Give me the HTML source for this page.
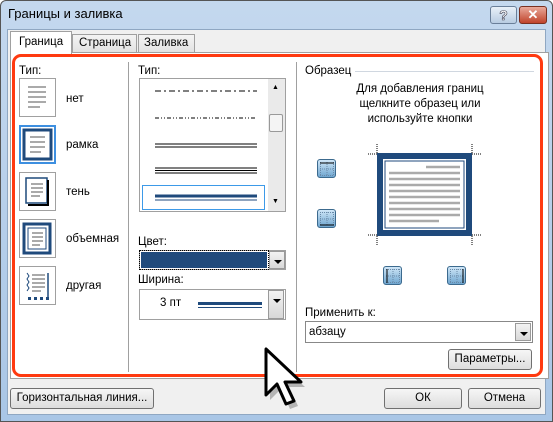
<!DOCTYPE html>
<html><head><meta charset="utf-8"><style>
*{margin:0;padding:0;box-sizing:border-box}
body{width:553px;height:422px;overflow:hidden;background:#fff;font-family:"Liberation Sans",sans-serif;font-size:11.5px;color:#000;position:relative}
.a{position:absolute}
.t{position:absolute;white-space:nowrap}
.box{position:absolute;border:1px solid #a0a0a0;background:#fff}
.btn{position:absolute;border:1px solid #707070;border-radius:3px;background:linear-gradient(#f6f6f6,#dddddd);text-align:center;line-height:18px}
.dd{position:absolute;width:16px;border:1px solid #9a9a9a;background:linear-gradient(#f3f3f3,#d8d8d8)}
.dd:after{content:"";position:absolute;left:4px;top:8px;border:4px solid transparent;border-top:4px solid #000;border-bottom:0}
.ic{position:absolute;left:19px;width:37px;height:39px;border:1px solid #a0a0a0;background:#fff}
.sb{position:absolute;width:19px;height:19px;border:1px solid #3c6a8e;border-radius:3px;background:linear-gradient(#cfe6f7,#6fa6d0)}
.sb svg{position:absolute;left:2px;top:2px}
</style></head><body>
<div class="a" style="left:0;top:0;width:553px;height:422px;background:linear-gradient(#c4d8ee,#a9c6e6);border:1px solid #555;border-radius:6px 6px 0 0"></div>
<div class="t" style="left:8px;top:6px;font-size:13px">Границы и заливка</div>
<div class="a" style="left:490px;top:6px;width:27px;height:18px;border:1px solid #6a7f99;border-radius:3px;background:linear-gradient(#e8f0f8,#b8cce2);text-align:center;font-size:14px;line-height:16px;color:#fff;font-weight:bold;-webkit-text-stroke:0.6px #445">?</div>
<div class="a" style="left:519px;top:6px;width:28px;height:18px;border:1px solid #7a3020;border-radius:3px;background:linear-gradient(#e9a99a,#c0432b);text-align:center;font-size:13px;line-height:16px;color:#fff;font-weight:bold">✕</div>
<div class="a" style="left:7px;top:29px;width:539px;height:386px;background:#f0f0f0;border:1px solid #8fa7c2"></div>
<div class="a" style="left:10px;top:52px;width:539px;height:327px;border:1px solid #a0a0a0;background:#fff"></div>
<div class="a" style="left:72px;top:34px;width:65px;height:19px;border:1px solid #a0a0a0;background:linear-gradient(#f4f4f4,#e2e2e2)"></div>
<div class="t" style="left:79px;top:37px">Страница</div>
<div class="a" style="left:138px;top:34px;width:57px;height:19px;border:1px solid #a0a0a0;background:linear-gradient(#f4f4f4,#e2e2e2)"></div>
<div class="t" style="left:144px;top:37px">Заливка</div>
<div class="a" style="left:10px;top:31px;width:62px;height:23px;border:1px solid #a0a0a0;border-bottom:none;background:#fff"></div>
<div class="t" style="left:19px;top:36px">Граница</div>
<div class="a" style="left:12px;top:54px;width:531px;height:323px;border:3px solid #ff3a10;border-radius:9px"></div>
<div class="a" style="left:128px;top:62px;width:1px;height:310px;background:#a0a0a0"></div>
<div class="a" style="left:296px;top:62px;width:1px;height:310px;background:#a0a0a0"></div>
<div class="t" style="left:19px;top:65px">Тип:</div>
<div class="ic" style="top:78px"><svg width="35" height="37"><g stroke="#aaa" stroke-width="2"><path d="M8 8h18M8 13h18M8 18h18M8 23h18M8 28h12"/></g></svg></div>
<div class="t" style="left:66px;top:93px">нет</div>
<div class="ic" style="top:125px;border:2px solid #3d8fe0"><svg width="33" height="35"><rect x="3" y="3" width="27" height="29" fill="none" stroke="#1f4a7c" stroke-width="3"/><g stroke="#aaa" stroke-width="2"><path d="M9 10h15M9 15h15M9 20h15M9 25h11"/></g></svg></div>
<div class="t" style="left:66px;top:139px">рамка</div>
<div class="ic" style="top:172px"><svg width="35" height="37"><rect x="6" y="5" width="21" height="25" fill="none" stroke="#1f4a7c" stroke-width="1.5"/><path d="M28 7v25h-20" fill="none" stroke="#000" stroke-width="2"/><g stroke="#aaa" stroke-width="2"><path d="M11 11h12M11 15h12M11 19h12M11 23h9"/></g></svg></div>
<div class="t" style="left:66px;top:186px">тень</div>
<div class="ic" style="top:219px"><svg width="35" height="37"><rect x="4" y="4" width="26" height="29" fill="none" stroke="#1f4a7c" stroke-width="3"/><rect x="8" y="8" width="18" height="21" fill="none" stroke="#1f4a7c" stroke-width="1"/><g stroke="#aaa" stroke-width="2"><path d="M12 13h11M12 17h11M12 21h11M12 25h8"/></g></svg></div>
<div class="t" style="left:66px;top:233px">объемная</div>
<div class="ic" style="top:266px"><svg width="35" height="37"><path d="M7 6l2 3-2 3 2 3-2 3 2 3-2 3" fill="none" stroke="#1f4a7c"/><path d="M28 6v24" stroke="#1f4a7c" stroke-width="1.5"/><g fill="#1f4a7c"><rect x="8" y="30" width="3" height="3"/><rect x="14" y="30" width="3" height="3"/><rect x="20" y="30" width="3" height="3"/><rect x="26" y="30" width="3" height="3"/></g><g stroke="#aaa" stroke-width="2"><path d="M12 8h13M12 12h13M12 16h13M12 20h13M12 24h9"/></g></svg></div>
<div class="t" style="left:66px;top:280px">другая</div>
<div class="t" style="left:138px;top:65px">Тип:</div>
<div class="box" style="left:139px;top:78px;width:147px;height:134px"></div>
<div class="a" style="left:268px;top:79px;width:17px;height:132px;background:#eaeaea"></div>
<div class="a" style="left:269px;top:114px;width:14px;height:18px;border:1px solid #999;background:#f4f4f4;border-radius:2px"></div>
<div class="t" style="left:272px;top:84px;font-size:7px">▲</div>
<div class="t" style="left:272px;top:198px;font-size:7px">▼</div>
<svg class="a" style="left:139px;top:78px" width="130" height="134">
<path d="M16 13h102" stroke="#000" stroke-dasharray="6 3 2 3"/>
<path d="M16 40h102" stroke="#000" stroke-dasharray="4 2 1 2 1 2"/>
<path d="M16 66h102M16 69h102" stroke="#000"/>
<path d="M16 90h102M16 92.5h102M16 95h102" stroke="#000"/>
<rect x="3.5" y="107.5" width="122" height="24" fill="none" stroke="#3d9ae8"/>
<path d="M16 118h102" stroke="#1f4a7c" stroke-width="3"/><path d="M16 122h102" stroke="#1f4a7c"/>
</svg>
<div class="t" style="left:138px;top:236px">Цвет:</div>
<div class="box" style="left:139px;top:250px;width:147px;height:20px"></div>
<div class="a" style="left:141px;top:252px;width:126px;height:16px;background:#1f4a7c;outline:1px dotted #000;outline-offset:1px"></div>
<div class="dd" style="left:269px;top:251px;height:18px"></div>
<div class="t" style="left:138px;top:274px">Ширина:</div>
<div class="box" style="left:139px;top:289px;width:147px;height:31px"></div>
<div class="t" style="left:160px;top:297px">3 пт</div>
<div class="a" style="left:198px;top:302px;width:64px;height:3px;background:#1f4a7c"></div>
<div class="a" style="left:198px;top:307px;width:64px;height:1px;background:#1f4a7c"></div>
<div class="dd" style="left:268px;top:290px;height:29px"></div>
<div class="t" style="left:305px;top:65px">Образец</div>
<div class="a" style="left:355px;top:71px;width:179px;height:1px;background:#d0d7e0"></div>
<div class="t" style="left:300px;top:82px;width:240px;text-align:center;white-space:normal;line-height:15px">Для добавления границ<br>щелкните образец или<br>используйте кнопки</div>
<svg class="a" style="left:368px;top:144px" width="113" height="102">
<g stroke="#000" stroke-dasharray="1 1" fill="none"><path d="M0 10h9V0M104 0v10h9M0 91h9v10M113 91h-9v10"/></g>
<rect x="12" y="12" width="89" height="77" fill="#fff" stroke="#1f4a7c" stroke-width="6"/>
<rect x="17" y="17" width="79" height="67" fill="none" stroke="#1f4a7c"/>
<g stroke="#aaa" stroke-width="2.5"><path d="M58 23h34M21 29h71M21 35h71M21 41h71M21 47h71M21 53h71M21 59h71M21 65h71M21 71h71M21 77h50"/></g>
</svg>
<div class="sb" style="left:317px;top:159px"><svg width="14" height="14"><g stroke="#6a8aa8" stroke-dasharray="1 1"><path d="M0 13.5h14M0 7h14M7 0v14M0.5 0v14M13.5 0v14"/></g><path d="M0 1h14" stroke="#000"/></svg></div>
<div class="sb" style="left:317px;top:209px"><svg width="14" height="14"><g stroke="#6a8aa8" stroke-dasharray="1 1"><path d="M0 0.5h14M0 7h14M7 0v14M0.5 0v14M13.5 0v14"/></g><path d="M0 13h14" stroke="#000"/></svg></div>
<div class="sb" style="left:383px;top:266px"><svg width="14" height="14"><g stroke="#6a8aa8" stroke-dasharray="1 1"><path d="M0 0.5h14M0 7h14M0 13.5h14M7 0v14M13.5 0v14"/></g><path d="M1 0v14" stroke="#000"/></svg></div>
<div class="sb" style="left:447px;top:266px"><svg width="14" height="14"><g stroke="#6a8aa8" stroke-dasharray="1 1"><path d="M0 0.5h14M0 7h14M0 13.5h14M7 0v14M0.5 0v14"/></g><path d="M13 0v14" stroke="#000"/></svg></div>
<div class="t" style="left:305px;top:307px">Применить к:</div>
<div class="box" style="left:305px;top:321px;width:228px;height:22px;border-color:#888"></div>
<div class="t" style="left:309px;top:326px">абзацу</div>
<div class="dd" style="left:515px;top:323px;height:18px"></div>
<div class="btn" style="left:448px;top:349px;width:84px;height:21px">Параметры...</div>
<div class="btn" style="left:10px;top:388px;width:144px;height:21px">Горизонтальная линия...</div>
<div class="btn" style="left:384px;top:388px;width:78px;height:21px">ОК</div>
<div class="btn" style="left:468px;top:388px;width:73px;height:21px">Отмена</div>
<svg class="a" style="left:262px;top:346px" width="50" height="66"><path d="M8 8v46l11-11 9 20 8-3-9-19h16z" fill="#000" opacity="0.25"/><path d="M4 3v46l11-11 9 20 8-3-9-19h16z" fill="#fff" stroke="#000" stroke-width="3" stroke-linejoin="round"/></svg>
</body></html>
